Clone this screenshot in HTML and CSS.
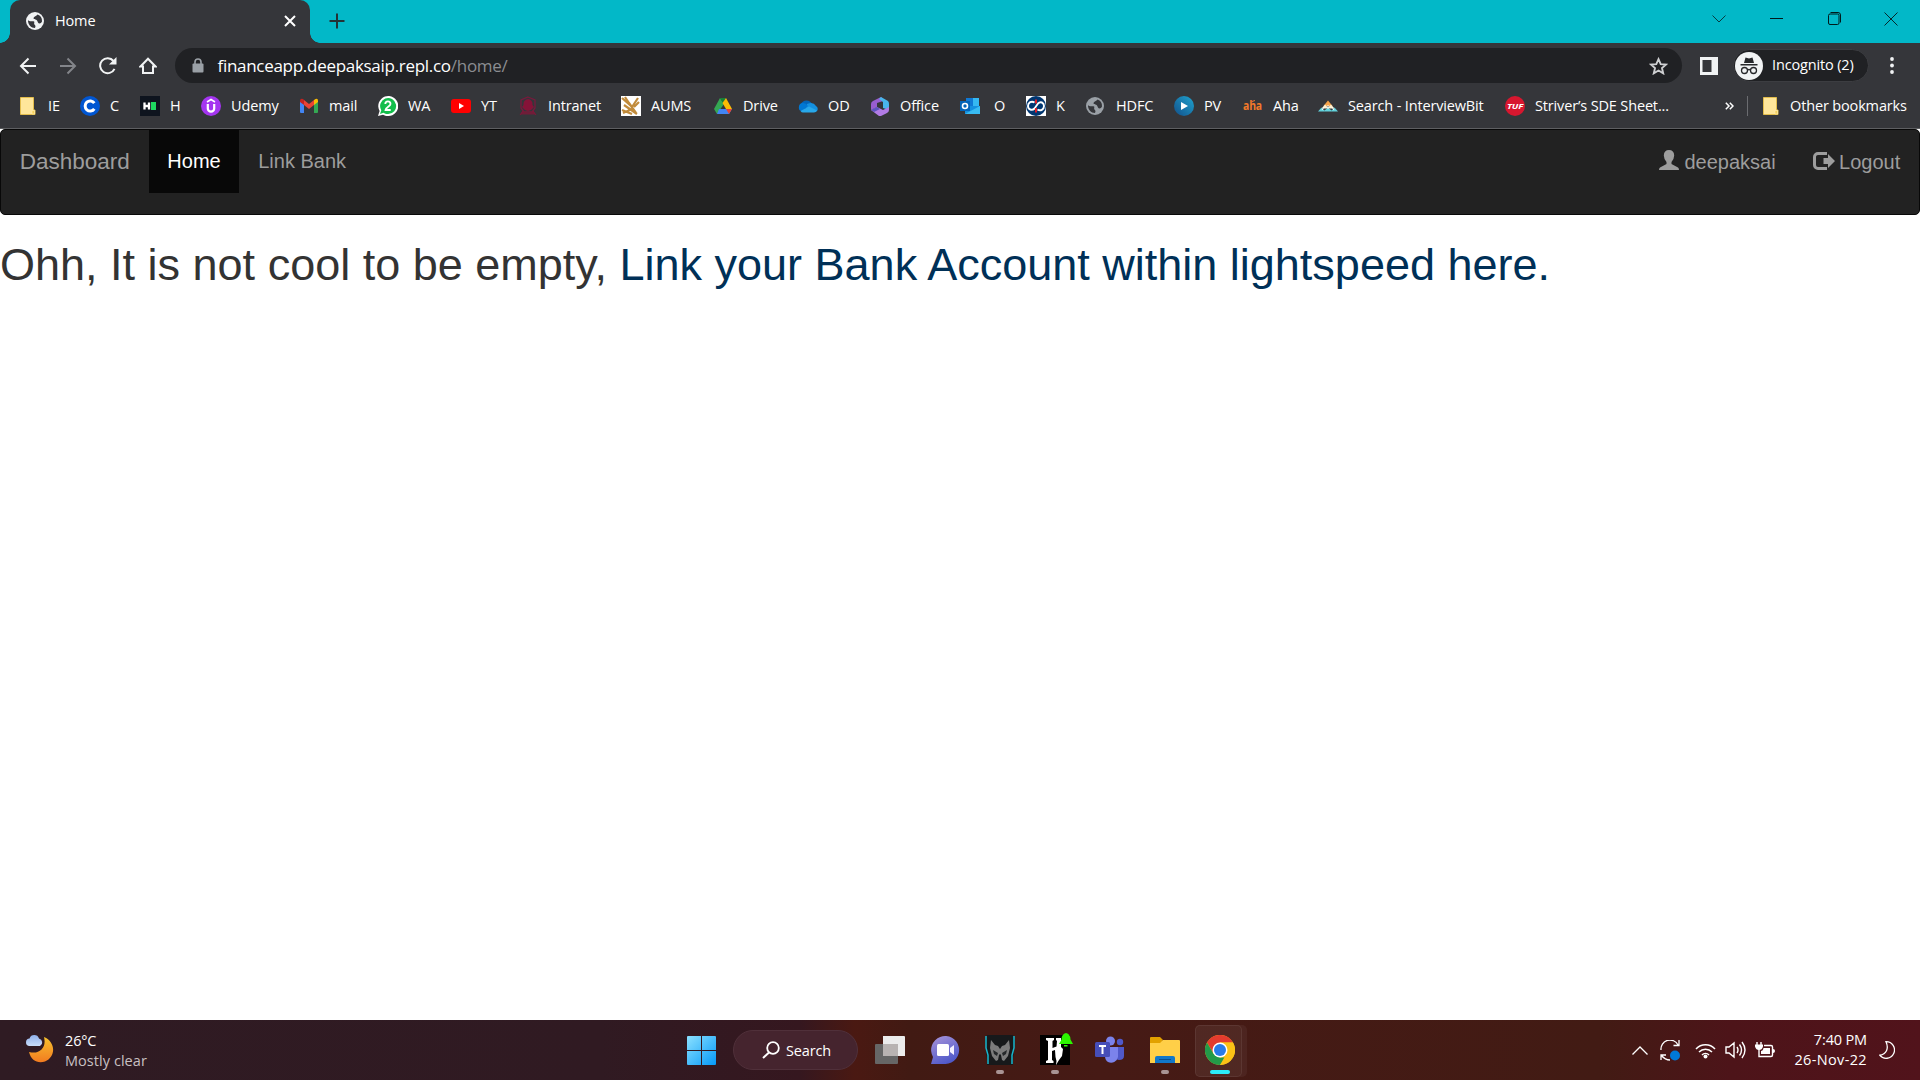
FILE: index.html
```html
<!DOCTYPE html>
<html lang="en">
<head>
<meta charset="utf-8">
<title>Home</title>
<link rel="stylesheet" href="styles.css">
</head>
<body>
<svg class="defs" width="0" height="0" aria-hidden="true">
  <defs>
    <symbol id="globe" viewBox="0 0 18 18"><circle cx="9" cy="9" r="9" fill="currentColor"/><path d="M2 8c1.500 2 3.500 1 5.500 1.300C9.500 9.700 7 12 9 13q1 1 0 3C5 16 1.800 12.500 2 8z" fill="#35363a"/><path d="M11.500 2.500C10.500 4.500 8 4 7.500 6c0 1.800 2.500 1 3.500 2.500.8 1.300 1 2.800 2.500 3 1 0 2-.8 2.500-2C16.300 6 14.500 3.500 11.500 2.500z" fill="#35363a"/></symbol>
    <symbol id="folder" viewBox="0 0 20 20"><path d="M2.500 1.500h13v12.500h1.500v4.500H2.500z" fill="#ffe69a" stroke="#e3bd4c"/><path d="M14 18v-3.500h2.500V18z" fill="#f5cf5a" stroke="#fff0b5" stroke-width=".6"/></symbol>
  </defs>
</svg>

<header class="tabstrip">
  <div class="tab">
    <svg class="favicon" width="18" height="18"><use href="#globe"/></svg>
    <span class="tab-title">Home</span>
    <svg width="12" height="12" viewBox="0 0 12 12"><path d="M1 1l10 10M11 1L1 11" stroke="#fff" stroke-width="2"/></svg>
  </div>
  <svg class="new-tab" width="16" height="16" viewBox="0 0 16 16"><path d="M8 .5v15M.5 8h15" stroke="#233337" stroke-width="2"/></svg>
  <div class="window-buttons">
    <svg width="14" height="8" viewBox="0 0 14 8"><path d="M.5.5L7 7l6.500-6.500" fill="none" stroke="#073b40"/></svg>
    <svg width="13" height="13" viewBox="0 0 13 13"><path d="M0 6.500h13" stroke="#001a1c"/></svg>
    <svg width="13" height="13" viewBox="0 0 13 13"><rect x=".5" y="2" width="10.500" height="10.500" rx="1.500" fill="none" stroke="#001a1c"/><path d="M2.500.5H10a2.500 2.500 0 012.500 2.500v7.500" fill="none" stroke="#001a1c"/></svg>
    <svg width="14" height="14" viewBox="0 0 14 14"><path d="M.5.5l13 13M13.500.5l-13 13" stroke="#05282b"/></svg>
  </div>
</header>

<div class="toolbar">
  <nav class="controls">
    <svg width="18" height="18" viewBox="0 0 18 18"><path d="M17 9H2M9.500 1.500L2 9l7.500 7.500" fill="none" stroke="#f1f3f4" stroke-width="2"/></svg>
    <svg width="18" height="18" viewBox="0 0 18 18"><path d="M1 9h15M8.500 1.500L16 9l-7.500 7.500" fill="none" stroke="#83858a" stroke-width="2"/></svg>
    <svg width="18" height="18" viewBox="0 0 18 18"><path d="M15.500 11.800A7.500 7.500 0 1114.500 4" fill="none" stroke="#f1f3f4" stroke-width="2"/><path d="M17.500 0v7.500H10z" fill="#f1f3f4"/></svg>
    <svg width="18" height="18" viewBox="0 0 18 18"><path d="M9 1.800L1.500 9.500H4V16h10V9.500h2.500z" fill="none" stroke="#f1f3f4" stroke-width="2"/></svg>
  </nav>
  <div class="omnibox">
    <svg width="12" height="15" viewBox="0 0 12 15"><path d="M3 6V4a3 3 0 016 0v2" fill="none" stroke="#9aa0a6" stroke-width="1.600"/><rect x=".5" y="5.500" width="11" height="9" rx="1" fill="#9aa0a6"/></svg>
    <span class="url"><span class="domain">financeapp.deepaksaip.repl.co</span><span class="path">/home/</span></span>
    <svg class="star" width="19" height="18" viewBox="0 0 19 18"><path d="M9.500 2.200l2.200 4.900 5.300.5-4 3.500 1.200 5.200-4.700-2.800-4.700 2.800L6 11.100 2 7.600l5.300-.5z" fill="none" stroke="#cfd0d2" stroke-width="1.900"/></svg>
  </div>
  <svg class="side-panel" width="18" height="18" viewBox="0 0 18 18"><path fill-rule="evenodd" d="M0 0h18v18H0zM2.500 3v12h9V3z" fill="#f1f3f4"/></svg>
  <div class="profile">
    <svg width="28" height="28" viewBox="0 0 28 28"><circle cx="14" cy="14" r="14" fill="#f1f3f4"/><path d="M9 11l1.500-5.500L14 6.500l3.500-1L19 11zM5.500 12h17v1.500h-17z" fill="#27282b"/><g fill="none" stroke="#27282b" stroke-width="1.300"><circle cx="9.500" cy="18.500" r="3"/><circle cx="18.500" cy="18.500" r="3"/><path d="M12.500 18q1.500-1 3 0"/></g></svg>
    <span>Incognito (2)</span>
  </div>
  <svg class="kebab" width="4" height="17" viewBox="0 0 4 17"><g fill="#f1f3f4"><circle cx="2" cy="2" r="1.900"/><circle cx="2" cy="8.500" r="1.900"/><circle cx="2" cy="15" r="1.900"/></g></svg>
</div>

<div class="bookmarks">
  <div class="bookmark"><svg viewBox="0 0 20 20"><use href="#folder"/></svg><span>IE</span></div>
  <div class="bookmark"><svg viewBox="0 0 20 20"><circle cx="10" cy="10" r="10" fill="#0056d2"/><path d="M14.300 7.200a5 5 0 100 5.600" fill="none" stroke="#fff" stroke-width="3"/></svg><span>C</span></div>
  <div class="bookmark"><svg viewBox="0 0 20 20"><path fill="#0e141e" d="M0 0h20v20H0z"/><path d="M4.500 6.500v7M9 6.500v7M4.500 10H9" stroke="#fff" stroke-width="2.300"/><path fill="#1ed760" d="M11 6h5v8h-5z"/></svg><span>H</span></div>
  <div class="bookmark"><svg viewBox="0 0 20 20"><circle cx="10" cy="10" r="10" fill="#a435f0"/><path d="M6.800 8v4.500a3.200 3.200 0 006.400 0V8" fill="none" stroke="#fff" stroke-width="2.200"/><path d="M6 6l4-2.500L14 6" fill="none" stroke="#fff" stroke-width="1.500"/></svg><span>Udemy</span></div>
  <div class="bookmark"><svg viewBox="0 0 20 20"><path fill="#4285f4" d="M1 5l4 3v9H2q-1 0-1-1z"/><path fill="#34a853" d="M15 8l4-3v11q0 1-1 1h-3z"/><path fill="#ea4335" d="M5 4l5 4 5-4v5l-5 4-5-4z"/><path fill="#c5221f" d="M1 5q0-3 3-2l1 1v5L1 6z"/><path fill="#fbbc04" d="M15 4q4-3 4 1v1l-4 3z"/></svg><span>mail</span></div>
  <div class="bookmark"><svg viewBox="0 0 20 20"><path d="M0 20l1.600-5A10 10 0 1110 20c-2 0-3.500-.5-5-1.300z" fill="#fff"/><path d="M2 18l1.300-3.800A8 8 0 1110 18c-2 0-3.300-.4-4.600-1.200z" fill="#12be4b"/><path d="M7.300 8c0-3.500 5.200-3.500 5.200 0 0 2.500-4.800 3-5 6h5.200" fill="none" stroke="#fff" stroke-width="1.800"/></svg><span>WA</span></div>
  <div class="bookmark"><svg viewBox="0 0 20 20"><rect y="3" width="20" height="14" rx="3" fill="#f00"/><path d="M8 7l5 3-5 3z" fill="#fff"/></svg><span>YT</span></div>
  <div class="bookmark intranet"><svg viewBox="0 0 20 20"><path d="M10 1l7 3v8l-3 4H6l-3-4V4z" fill="none" stroke="#781b3d" stroke-width="1.300"/><path d="M10 3q5 1 4.500 6L16 11l-3 3-3 1-3-1-3-3 1.500-2Q5 4 10 3z" fill="#851338"/><path d="M3 16.500l3-1 4 1 4-1 3 1v2H3z" fill="#701d38"/><path d="M2 19l3-4M18 19l-3-4" stroke="#851338"/></svg><span>Intranet</span></div>
  <div class="bookmark"><svg viewBox="0 0 20 20"><path fill="#fff" d="M0 0h20v20H0z"/><path d="M1 2l9 8M4 1l6 9M11 11l6-9M13 11l5-5M3 9l13 9M1 14l10 4M8 7l7 10M2 17l9-4" stroke="#c18b3b" stroke-width="2.200"/></svg><span>AUMS</span></div>
  <div class="bookmark"><svg viewBox="0 0 20 20"><path fill="#34a853" d="M7 2l4 6-7 10-3-5z"/><path fill="#188038" d="M7 2h6l-3 5z"/><path fill="#fbbc04" d="M13 2l6 11h-6L9.500 7z"/><path fill="#4285f4" d="M6 13h13l-3 5H4z"/><path fill="#ea4335" d="M13 13h6l-3 5z"/></svg><span>Drive</span></div>
  <div class="bookmark"><svg viewBox="0 0 20 20"><path d="M3 8a6 6 0 0111 0l2 8H4z" fill="#0364b8"/><path d="M9 8q6-3 9 2c3 2 2 6-2 6H7z" fill="#1490df"/><path d="M1 10a4 4 0 014-3q3 0 5 3l-6 5q-4 0-3-5z" fill="#0078d4"/><path d="M2.500 15L11 10.500l8 4q-1 2-3 2H5q-1.500 0-2.500-1.500z" fill="#28a8ea"/></svg><span>OD</span></div>
  <div class="bookmark"><svg viewBox="0 0 20 20"><path d="M11 1L3 5q-2 1-2 3v6l6-3V7l6-2V3z" fill="#985dcf"/><path d="M11 1l7 4q1 1 1 3v6l-6-2V6L9 3z" fill="#49b5ec"/><path d="M1 14l6-3 6 3 6-3v3q0 2-2 3l-6 3H9z" fill="#b17be5"/><path d="M1 14l6-3 3 2-6 3z" fill="#5e54be"/></svg><span>Office</span></div>
  <div class="bookmark outlook"><svg viewBox="0 0 20 20"><path fill="#0f78d4" d="M6 2h13v9H6z"/><path fill="#35b8f1" d="M13 2h6v8h-6z"/><path fill="#1490df" d="M5 10h15v8H5z"/><path fill="#50d9ff" d="M5 18l15-8v8z" opacity=".6"/><path fill="#0364b8" d="M0 5h10v10H0z"/><circle cx="5" cy="10" r="2.500" fill="none" stroke="#fff" stroke-width="1.600"/></svg><span>O</span></div>
  <div class="bookmark"><svg viewBox="0 0 20 20"><path fill="#fff" d="M0 0h20v20H0z"/><circle cx="10" cy="10" r="10" fill="#003670"/><path d="M8.500 6.500c-3-2-6.500 0-6.500 3.500s4 5 6.500 2.500L12 7.500c2.500-2.500 6-1 6 2.500s-3.500 5.500-6.500 3.500" fill="none" stroke="#fff" stroke-width="1.900"/><path d="M10 3.500v4M10 12v4.500" stroke="#ed1c24" stroke-width="1.900"/></svg><span>K</span></div>
  <div class="bookmark grey"><svg viewBox="0 0 20 20"><use href="#globe" x="0" y="1" width="18" height="18"/></svg><span>HDFC</span></div>
  <div class="bookmark"><svg viewBox="0 0 20 20"><defs><linearGradient id="pv" x1="0" y1="1" x2="1" y2="0"><stop stop-color="#12508a"/><stop offset="1" stop-color="#1fa3cf"/></linearGradient></defs><circle cx="10" cy="10" r="10" fill="url(#pv)"/><path d="M7 6l7 4-7 4z" fill="#fff"/></svg><span>PV</span></div>
  <div class="bookmark"><svg viewBox="0 0 20 20"><text x="0" y="14" class="aha-mark" textLength="19" lengthAdjust="spacingAndGlyphs">aha</text><path d="M9 5.500l3-1" stroke="#f37a2a"/></svg><span>Aha</span></div>
  <div class="bookmark"><svg viewBox="0 0 20 20"><path d="M5.500 10L10 4.500l4.500 5.500z" fill="#f5a34a"/><path d="M3.500 12.500L7 8.500l3 3 3-3 3.500 4z" fill="#fff0cf"/><path d="M0 15.500l3.500-4 3 3 3.500-3 3.500 3 3-3 3.500 4z" fill="#62d2dc"/><path d="M4 14l2-3M10 13V9M16 14l-2-3" stroke="#fff"/></svg><span>Search - InterviewBit</span></div>
  <div class="bookmark"><svg viewBox="0 0 20 20"><circle cx="10" cy="10" r="10" fill="#d7172f"/><text x="2" y="12.500" class="tuf-mark" textLength="16" lengthAdjust="spacingAndGlyphs">TUF</text></svg><span>Striver’s SDE Sheet...</span></div>
  <svg class="overflow" width="9" height="8" viewBox="0 0 9 8"><path d="M.8.8L4 4 .8 7.200M4.800.8L8 4 4.800 7.200" fill="none" stroke="#fff" stroke-width="1.500"/></svg>
  <div class="bookmark other"><svg viewBox="0 0 20 20"><use href="#folder"/></svg><span>Other bookmarks</span></div>
</div>

<main class="page">
  <nav class="navbar">
    <a class="brand">Dashboard</a>
    <a class="nav-link active">Home</a>
    <a class="nav-link">Link Bank</a>
    <div class="nav-right">
      <a class="nav-link"><svg width="20" height="20" viewBox="0 0 20 20"><path d="M10 0q5 0 5.200 5.500Q15 9.500 12.500 12v2l6.500 3.500q1 .8 1 2.500H0q0-1.700 1-2.500L7.500 14v-2Q5 9.500 4.800 5.500 5 0 10 0z" fill="#9d9d9d"/></svg>deepaksai</a>
      <a class="nav-link logout"><svg width="22" height="18" viewBox="0 0 22 18"><path d="M14 1.500H5A3.500 3.500 0 001.500 5v8A3.500 3.500 0 005 16.500h9" fill="none" stroke="#9d9d9d" stroke-width="3"/><path d="M10.500 6H15V2l7 7-7 7v-4h-4.500z" fill="#9d9d9d"/></svg>Logout</a>
    </div>
  </nav>
  <h1>Ohh, It is not cool to be empty, <a>Link your Bank Account within lightspeed here.</a></h1>
</main>

<footer class="taskbar">
  <div class="weather">
    <svg width="30" height="30" viewBox="0 0 30 30"><defs><linearGradient id="moon" x2="0" y2="1"><stop stop-color="#f6c22e"/><stop offset="1" stop-color="#f27b20"/></linearGradient><linearGradient id="cloud" x2="0" y2="1"><stop stop-color="#8fb0ea"/><stop offset="1" stop-color="#c8ddfa"/></linearGradient></defs><path d="M19 4c12 5 12 20 1 24.500-7 2.500-14-1-16-9.500q8 2 12.500-2.500T19 4z" fill="url(#moon)"/><path d="M4 13a3.800 3.800 0 01.5-7.500A5 5 0 0114 5.500 4 4 0 0115 13z" fill="url(#cloud)"/></svg>
    <div class="weather-text"><span>26°C</span><span class="dim">Mostly clear</span></div>
  </div>
  <div class="apps">
    <div class="app start"><svg width="29" height="29" viewBox="0 0 29 29"><defs><linearGradient id="win" x2="1" y2="1"><stop stop-color="#8ce1ff"/><stop offset="1" stop-color="#0599f8"/></linearGradient></defs><path d="M0 1q0-1 1-1h13v14H0zM15 0h13q1 0 1 1v13H15zM0 15h14v14H1q-1 0-1-1zM15 15h14v13q0 1-1 1H15z" fill="url(#win)"/></svg></div>
    <div class="search"><svg width="18" height="18" viewBox="0 0 18 18"><circle cx="11" cy="7" r="5.800" fill="none" stroke="#fff" stroke-width="1.800"/><path d="M7 11.500L1 17" stroke="#fff" stroke-width="2"/></svg><span>Search</span></div>
    <div class="app"><svg width="30" height="28" viewBox="0 0 30 28"><path fill="#ececec" d="M8 0h21q1 0 1 1v19H8z"/><rect y="8" width="23" height="20" rx="1" fill="#666"/><path fill="#b8b3b2" d="M8 8h15v12H8z"/></svg></div>
    <div class="app"><svg width="29" height="29" viewBox="0 0 29 29"><defs><linearGradient id="chat" x2=".5" y2="1"><stop stop-color="#a995da"/><stop offset="1" stop-color="#5059c9"/></linearGradient></defs><path d="M0 28l2-7A14 14 0 1114.500 28z" fill="url(#chat)"/><rect x="6" y="8" width="12" height="12" rx="1.500" fill="#fff"/><path d="M19 12l4-3v10l-4-3z" fill="#f2f0ff"/></svg></div>
    <div class="app running"><svg width="30" height="30" viewBox="0 0 30 30"><path d="M2 0h26l2 5-2 20v5H2v-5L0 5z" fill="#17191b"/><path d="M1 1v12l2 7v9M29 1v12l-2 7v9" fill="none" stroke="#19b6cd" stroke-width="1.500"/><path d="M6 5l4 5 3 1 2 3 2-3 3-1 4-5 1 8-2 8-4 5-2-1-1-5-1-1-1 1-1 5-2 1-4-5-2-8z" fill="#7c7c7c"/><path d="M8 15l5 3-1 3-3-2zM22 15l-5 3 1 3 3-2z" fill="#25282a"/></svg></div>
    <div class="app running"><svg class="badged" width="30" height="30" viewBox="0 0 30 30"><path fill="#000" d="M0 0h30v30H0z"/><path d="M6 3h8v2l-1.500 1v7l4-1.500L17 6l-1-1V3h5v9l2 2-1 7-3 4-3 5q1-5-.5-8l-.5-7-3 1v9l1.500 1v2H6v-2l2-1V6L6 5z" fill="#fff"/><path d="M26-2q4.500 1 4.500 6.500L33 9H19l2.500-4.500Q21.500-1 26-2zM24 10h3.500v1.500H24z" fill="#2cf500"/></svg></div>
    <div class="app"><svg width="30" height="28" viewBox="0 0 30 28"><circle cx="15.500" cy="5" r="4.500" fill="#7b83eb"/><circle cx="25" cy="6" r="3.200" fill="#5059c9"/><path d="M21 11h8v9q0 4-5 4-3 0-3-3z" fill="#5059c9"/><path d="M10 11h13v10a7 7 0 01-10 5q-3-2-3-6z" fill="#7b83eb"/><rect y="6" width="15" height="15" rx="1.500" fill="#464eb8"/><path d="M4 10h7M7.500 10v8" stroke="#fff" stroke-width="2"/></svg></div>
    <div class="app running"><svg width="30" height="26" viewBox="0 0 30 26"><path d="M0 1q0-1 1-1h9l3 3-3 5H0z" fill="#e2a100"/><path d="M0 6h10l3-3h16q1 0 1 1v22H0z" fill="#ffcf48"/><path d="M5 26v-5q0-2 2-2h16q2 0 2 2v5z" fill="#1177c9"/><path d="M9 22.500h12" stroke="#074f91"/></svg></div>
    <div class="app running focused"><svg width="30" height="30" viewBox="0 0 30 30"><circle cx="15" cy="15" r="15" fill="#fbc116"/><path d="M2 7.500A15 15 0 0128 7.500H15l-6.500 11z" fill="#e33b2e"/><path d="M2 7.500L8.500 18.700 15 22.500h6.500L15 30A15 15 0 012 7.500z" fill="#239a49"/><path d="M21.500 18.700L15 30A15 15 0 0028 7.500H15z" fill="#fbc116"/><circle cx="15" cy="15" r="7.500" fill="#fff"/><circle cx="15" cy="15" r="6" fill="#287be8"/></svg></div>
  </div>
  <div class="tray">
    <svg width="16" height="9" viewBox="0 0 16 9"><path d="M.5 8.500L8 1l7.500 7.500" fill="none" stroke="#fff" stroke-width="1.300"/></svg>
    <svg width="21" height="21" viewBox="0 0 21 21"><path d="M1 10a9 9 0 0117-5M19 0v5.500h-5.500M1 20v-5h5M1.500 15.500Q5 20 10 20" fill="none" stroke="#fff" stroke-width="1.300"/><circle cx="15" cy="15.500" r="5" fill="#0078d7"/></svg>
    <svg width="21" height="17" viewBox="0 0 21 17"><g fill="none" stroke="#fff" stroke-width="1.500"><path d="M1 7a13 13 0 0119 0M4 10a9 9 0 0113 0M7 13a5 5 0 017 0"/></g><circle cx="10.500" cy="14.500" r="2" fill="#fff"/></svg>
    <svg width="21" height="18" viewBox="0 0 21 18"><path d="M1 6h3l5-4v14l-5-4H1zM12 6q2 3 0 6M14.500 3.500q4 5.500 0 11M17 1q6 8 0 16" fill="none" stroke="#fff" stroke-width="1.400"/></svg>
    <svg width="20" height="16" viewBox="0 0 20 16"><path d="M2 0v3M6 0v3M4 6v8.500h12q1.500 0 1.500-1.500V5q0-1.500-1.500-1.500H9" fill="none" stroke="#fff" stroke-width="1.400"/><path d="M0 2.500h8v2Q7 8 4 8 1 8 0 4.500zM8.500 6h6.500v6H6V9q2 0 2.500-3zM18 7q2 0 2 2t-2 2z" fill="#fff"/></svg>
    <div class="clock"><span>7:40 PM</span><span class="date">26-Nov-22</span></div>
    <svg width="16" height="18" viewBox="0 0 16 18"><path d="M7 .7a8.300 8.300 0 11-6.300 13.500q5-.7 6.800-4.500T7 .7z" fill="none" stroke="#fff" stroke-width="1.300"/></svg>
  </div>
</footer>
</body>
</html>
```
FILE: styles.css
```css
* { box-sizing: border-box; }

body {
  margin: 0;
  height: 1080px;
  overflow: hidden;
  display: flex;
  flex-direction: column;
  background: #fff;
  color: #fff;
  font-family: "Open Sans", sans-serif;
  font-size: 14.5px;
  letter-spacing: -0.15px;
  white-space: nowrap;
}

svg { display: block; flex: none; }
.defs { position: absolute; }

/* Tab strip */
.tabstrip {
  height: 43px;
  display: flex;
  align-items: flex-start;
  background: #02b8c8;
  padding-left: 10px;
}
.tab {
  position: relative;
  width: 300px;
  height: 43px;
  padding: 0 14px 1px 16px;
  display: flex;
  align-items: center;
  background: #35363a;
  border-radius: 10px 10px 0 0;
}
.tab::before,
.tab::after {
  content: "";
  position: absolute;
  bottom: 0;
  width: 10px;
  height: 10px;
}
.tab::before { left: -10px; background: radial-gradient(circle at 0 0, transparent 9.5px, #35363a 10px); }
.tab::after { right: -10px; background: radial-gradient(circle at 100% 0, transparent 9.5px, #35363a 10px); }
.favicon { color: #f1f3f4; }
.tab-title { flex: 1; margin-left: 11px; padding-bottom: 2px; }
.new-tab { margin: 13px 0 0 19px; }
.window-buttons {
  margin-left: auto;
  height: 37px;
  display: grid;
  grid-template-columns: repeat(4, 57.3px);
  place-items: center;
}

/* Address row */
.toolbar {
  height: 45px;
  display: flex;
  align-items: center;
  background: #35363a;
}
.controls { width: 175px; padding-left: 18.5px; display: flex; gap: 22px; }
.omnibox {
  width: 1507px;
  height: 35px;
  padding: 0 14px 0 17px;
  display: flex;
  align-items: center;
  background: #202124;
  border-radius: 18px;
}
.url { margin-left: 13.5px; flex: 1; font-size: 17px; letter-spacing: -0.29px; }
.path { color: #8b8d91; }
.side-panel { margin-left: 18px; }
.profile {
  width: 136px;
  height: 33px;
  margin-left: 15px;
  padding-left: 1px;
  display: flex;
  align-items: center;
  gap: 9px;
  background: #202124;
  border: 1px solid #3c3d41;
  border-radius: 17px;
}
.profile span { padding-bottom: 2px; }
.kebab { margin-left: 21px; }

/* Bookmarks bar */
.bookmarks {
  height: 41px;
  padding: 0 0 4px 18px;
  display: grid;
  grid-template-columns: 62px 60px 61px 98px 79px 73px 67px 103px 92px 85px 72px 90px 66px 60px 88px 69px 75px 187px 220px 22px 1fr;
  align-items: center;
  background: #35363a;
  border-bottom: 1px solid #5e5f62;
}
.bookmark { display: flex; align-items: center; gap: 10px; }
.bookmark svg { width: 20px; height: 20px; }
.bookmark span { padding-bottom: 2px; }
.grey svg { color: #9aa0a6; }
.outlook { gap: 14px; }
.other { height: 20px; padding-left: 13px; gap: 9px; border-left: 1px solid #6b6c70; }
.aha-mark { font: 700 12px "Open Sans", sans-serif; fill: #f37a2a; }
.tuf-mark { font: italic 700 7px "Open Sans", sans-serif; fill: #fff; }

/* Web page */
.page {
  flex: 1;
  font-family: "Liberation Sans", Arial, sans-serif;
  letter-spacing: 0;
}
.navbar {
  height: 86px;
  display: flex;
  align-items: flex-start;
  background: #222;
  border: 1px solid #080808;
  border-radius: 5px;
  color: #9d9d9d;
  font-size: 20px;
  line-height: 25px;
}
.brand { padding: 18.75px; font-size: 22.5px; }
.nav-link { height: 63px; padding: 18.75px; display: flex; }
.active { background: #080808; color: #fff; }
.nav-right { margin-left: auto; display: flex; padding-top: 1px; }
.nav-right svg { margin: 0 5px 0 0; }
.nav-right .logout svg { margin-top: 2px; margin-right: 4px; }
h1 {
  margin: 25px 0 0;
  color: #333;
  font-size: 45px;
  font-weight: 400;
  line-height: 50px;
}
h1 a { color: #003057; }

/* Desktop taskbar */
.taskbar {
  height: 60px;
  display: grid;
  grid-template-columns: 673px 1fr 295px;
  background: linear-gradient(90deg, #2f1b23 0, #301a22 600px, #35171f 800px, #4a1912 855px, #411a13 910px, #461a15 1100px, #421b14 1600px, #4d1419 1730px, #51131b 1920px);
}
.weather { display: flex; padding: 13px 0 0 25px; gap: 10px; }
.weather-text { display: flex; flex-direction: column; line-height: 20px; margin-top: -2.5px; }
.dim { color: #c8c0c2; letter-spacing: 0.05px; }
.apps { display: flex; align-items: center; }
.app {
  position: relative;
  width: 55px;
  height: 60px;
  display: flex;
  align-items: center;
  justify-content: center;
}
.badged { overflow: visible; }
.start { width: 57px; margin-right: 3px; }
.search {
  width: 125px;
  height: 40px;
  margin-right: 4.5px;
  padding-left: 28px;
  display: flex;
  align-items: center;
  gap: 6px;
  background: #45242e;
  border: 1px solid #50303a;
  border-radius: 20px;
}
.running::after {
  content: "";
  position: absolute;
  bottom: 6px;
  width: 8px;
  height: 4px;
  border-radius: 2px;
  background: #a99494;
}
.focused::before {
  content: "";
  position: absolute;
  left: 2px;
  top: 5px;
  width: 45px;
  height: 50px;
  background: #ffffff10;
  border: 1px solid #ffffff12;
  border-radius: 5px;
  box-shadow: 5px 0 0 #ffffff0c;
}
.focused svg { position: relative; }
.focused::after { width: 20px; background: #2cecf9; }
.tray { display: flex; align-items: center; padding-left: 7px; }
.tray > svg:nth-of-type(2) { margin-left: 12px; }
.tray > svg:nth-of-type(3) { margin-left: 14px; }
.tray > svg:nth-of-type(4) { margin-left: 9px; }
.tray > svg:nth-of-type(5) { margin-left: 9px; }
.clock { width: 92px; display: flex; flex-direction: column; text-align: right; line-height: 20px; }
.date { letter-spacing: 0.35px; }
.tray > svg:last-child { margin-left: 12px; }
```
